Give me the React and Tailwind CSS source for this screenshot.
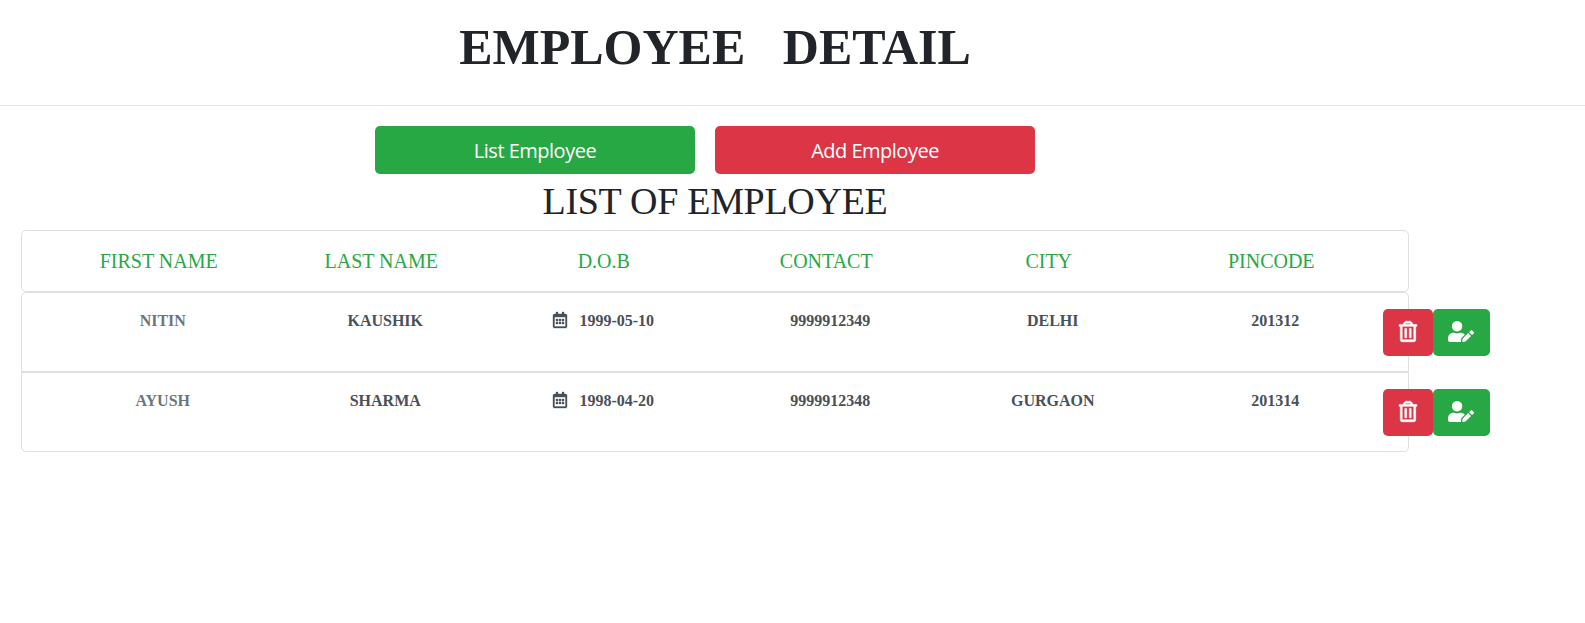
import { FaRegCalendarAlt, FaRegTrashAlt, FaUserEdit } from "react-icons/fa";

const COLUMNS = ["FIRST NAME", "LAST NAME", "D.O.B", "CONTACT", "CITY", "PINCODE"];

const EMPLOYEES = [
  { first: "NITIN", last: "KAUSHIK", dob: "1999-05-10", contact: "9999912349", city: "DELHI", pin: "201312" },
  { first: "AYUSH", last: "SHARMA", dob: "1998-04-20", contact: "9999912348", city: "GURGAON", pin: "201314" },
];

function EmployeeRow({ employee, last }) {
  return (
    <li
      className={
        "flex h-20 border border-[#dfdfdf] pl-[29.5px] pt-4 text-base font-bold leading-6 text-[#495057] " +
        (last ? "rounded-b-[5px]" : "rounded-t-[5px]")
      }
    >
      <div className="grid w-[1335px] shrink-0 grid-cols-6 text-center">
        <span className="text-[#6c757d]">{employee.first}</span>
        <span>{employee.last}</span>
        <span className="flex justify-center pr-2">
          <FaRegCalendarAlt className="mr-[12px] mt-[3px] h-4 w-[14px] overflow-visible" strokeWidth={12} />
          {employee.dob}
        </span>
        <span>{employee.contact}</span>
        <span>{employee.city}</span>
        <span>{employee.pin}</span>
      </div>
      <div className="-ml-[3.5px] flex shrink-0">
        <button className="flex h-[47px] w-[50px] items-center justify-center rounded-[5px] bg-[#dc3545] pb-[2px] pr-px text-white">
          <FaRegTrashAlt className="h-[21px] w-[18px] overflow-visible" strokeWidth={14} />
        </button>
        <button className="flex h-[47px] w-[57px] items-center justify-center rounded-[5px] bg-[#28a745] pb-[2px] pr-px text-white">
          <FaUserEdit className="h-[21px] w-[26px]" />
        </button>
      </div>
    </li>
  );
}

export default function App() {
  return (
    <div className="min-h-screen w-full overflow-hidden bg-white font-['Liberation_Serif',serif] text-[#212529]">
      <header className="h-[106px] border-b border-[#e5e5e5] pt-[17px]">
        <h1 className="w-[1430px] whitespace-pre text-center text-[50px] font-bold leading-[60px]">
          {"EMPLOYEE   DETAIL"}
        </h1>
      </header>
      <main className="w-[1429px] pl-[21px] pr-5 pt-5">
        <div className="flex gap-5 pl-[354px] font-['Open_Sans',sans-serif] text-[20px] tracking-[-0.5px] text-white">
          <button className="h-12 w-80 rounded-[5px] bg-[#28a745] pt-px">List Employee</button>
          <button className="h-12 w-80 rounded-[5px] bg-[#dc3545] pt-px">Add Employee</button>
        </div>
        <h2 className="h-14 pt-[3px] text-center text-[38px] leading-[48px] tracking-[-0.3px]">LIST OF EMPLOYEE</h2>
        <div className="h-[62px] rounded-[5px] border border-[#dfdfdf] pl-[25.5px] pt-[15px]">
          <div className="grid w-[1335px] grid-cols-6 text-center text-xl leading-[30px] text-[#28a745]">
            {COLUMNS.map((name) => (
              <span key={name}>{name}</span>
            ))}
          </div>
        </div>
        <ul>
          {EMPLOYEES.map((employee, i) => (
            <EmployeeRow key={employee.contact} employee={employee} last={i === EMPLOYEES.length - 1} />
          ))}
        </ul>
      </main>
    </div>
  );
}
